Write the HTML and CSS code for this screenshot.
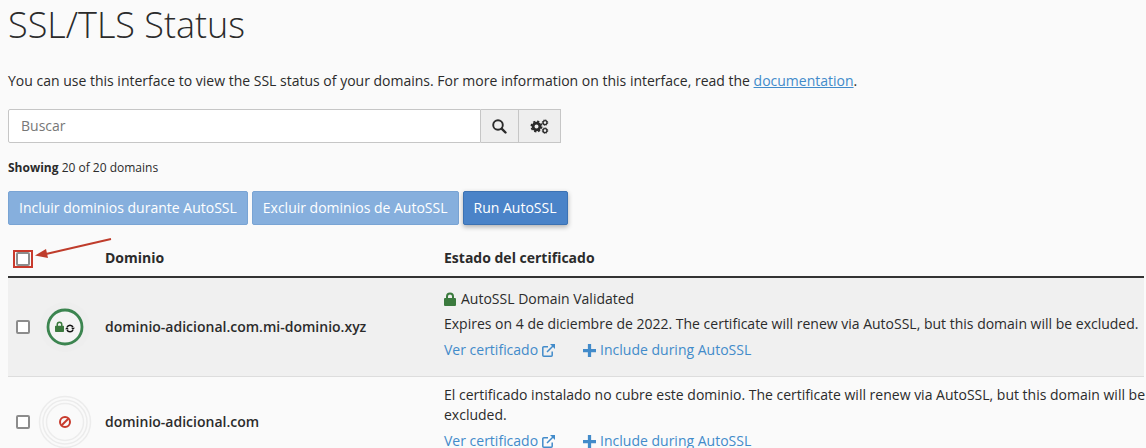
FILE: index.html
```html
<!DOCTYPE html>
<html lang="es">
<head>
<meta charset="utf-8">
<title>SSL/TLS Status</title>
<link rel="stylesheet" href="styles.css">
</head>
<body>
<svg class="sprite" aria-hidden="true">
  <symbol id="lock" viewBox="0 0 12 14"><path fill="currentColor" d="M1 6h1V4.500a4 4 0 0 1 8 0V6h1a1 1 0 0 1 1 1v6a1 1 0 0 1-1 1H1a1 1 0 0 1-1-1V7a1 1 0 0 1 1-1zm3 0h4V4.500a2 2 0 0 0-4 0z"/></symbol>
  <symbol id="external" viewBox="0 0 13 13"><path fill="none" stroke="currentColor" stroke-width="1.500" d="M6 2.800H1.800a1 1 0 0 0-1 1v7.400a1 1 0 0 0 1 1h7.400a1 1 0 0 0 1-1V7.500M5 8l6-6"/><path fill="currentColor" d="M8 0H13v5z"/></symbol>
  <symbol id="plus" viewBox="0 0 12 12"><path fill="currentColor" d="M4.500 0h3v4.500H12v3H7.500V12h-3V7.500H0v-3h4.500z"/></symbol>
</svg>
<main class="page">
  <h1 class="title">SSL/TLS Status</h1>
  <p class="intro">You can use this interface to view the SSL status of your domains. For more information on this interface, read the <a class="doc-link" href="#">documentation</a>.</p>

  <form class="search" role="search">
    <input class="search-input" type="text" placeholder="Buscar" aria-label="Buscar">
    <button class="search-button" type="button" aria-label="Buscar dominios">
      <svg width="15" height="15" viewBox="0 0 15 15" fill="none" stroke="currentColor"><circle cx="6" cy="6" r="4.800" stroke-width="1.900"/><path d="M9.600 9.600l3.900 3.900" stroke-width="2.400" stroke-linecap="round"/></svg>
    </button>
    <button class="search-button" type="button" aria-label="Opciones">
      <svg width="19" height="15" viewBox="0 0 19 15" fill="none" stroke="currentColor"><circle cx="6.500" cy="7.500" r="3.400" stroke-width="2.800"/><circle cx="6.500" cy="7.500" r="5.200" stroke-width="1.600" stroke-dasharray="2.200 1.884"/><circle cx="15" cy="3.600" r="2" stroke-width="1.400"/><circle cx="15" cy="3.600" r="2.800" stroke-width=".8" stroke-dasharray="1.300 .9"/><circle cx="15" cy="11.600" r="2" stroke-width="1.400"/><circle cx="15" cy="11.600" r="2.800" stroke-width=".8" stroke-dasharray="1.300 .9"/></svg>
    </button>
  </form>

  <p class="showing"><strong>Showing</strong> 20 of 20 domains</p>

  <div class="actions">
    <button class="btn" type="button" disabled>Incluir dominios durante AutoSSL</button>
    <button class="btn" type="button" disabled>Excluir dominios de AutoSSL</button>
    <button class="btn btn-run" type="button">Run AutoSSL</button>
  </div>

  <table class="domains">
    <thead>
      <tr>
        <th class="col-check">
          <span class="marked"><input class="check" type="checkbox" aria-label="Seleccionar todos"></span>
          <svg class="arrow" width="80" height="24" viewBox="0 0 80 24" aria-hidden="true"><path d="M77 2L12 17" stroke="#bf3c2b" stroke-width="1.800"/><path d="M1 18.500L12 12l2 9z" fill="#bf3c2b"/></svg>
        </th>
        <th class="col-icon"></th>
        <th class="col-domain">Dominio</th>
        <th class="col-status">Estado del certificado</th>
      </tr>
    </thead>
    <tbody>
      <tr class="row-alt">
        <td class="col-check"><input class="check" type="checkbox" aria-label="dominio-adicional.com.mi-dominio.xyz"></td>
        <td class="col-icon">
          <svg class="status" width="54" height="54" viewBox="0 0 54 54" aria-hidden="true">
            <circle cx="27" cy="27" r="25" fill="#eee"/>
            <circle cx="27" cy="27" r="17" fill="#f4f4f4" stroke="#3c8550" stroke-width="2.800"/>
            <svg class="green" x="17" y="21" width="9" height="11" viewBox="0 0 12 14" preserveAspectRatio="none"><use href="#lock" width="12" height="14"/></svg>
            <path d="M29 27.300a3.200 3.200 0 0 1 6 0M35 29.700a3.200 3.200 0 0 1-6 0" fill="none" stroke="#111" stroke-width="1.500"/><path d="M27 29.300l1.900-2 2 2zM33 27.700h4l-2 2z" fill="#111"/>
          </svg>
        </td>
        <td class="col-domain">dominio-adicional.com.mi-dominio.xyz</td>
        <td class="col-status">
          <p class="validated"><svg class="lock" width="12" height="14" aria-hidden="true"><use href="#lock"/></svg>AutoSSL Domain Validated</p>
          <p class="detail">Expires on 4 de diciembre de 2022. The certificate will renew via AutoSSL, but this domain will be excluded.</p>
          <div class="links">
            <a class="link" href="#">Ver certificado<svg width="13" height="13" aria-hidden="true"><use href="#external"/></svg></a>
            <a class="link" href="#"><svg width="13" height="13" aria-hidden="true"><use href="#plus"/></svg>Include during AutoSSL</a>
          </div>
        </td>
      </tr>
      <tr>
        <td class="col-check"><input class="check" type="checkbox" aria-label="dominio-adicional.com"></td>
        <td class="col-icon">
          <svg class="status" width="54" height="54" viewBox="0 0 54 54" fill="none" aria-hidden="true">
            <circle cx="27" cy="27" r="25.500" stroke="#ececec" stroke-width="1.500"/><circle cx="27" cy="27" r="22" stroke="#ececec" stroke-width="1.500"/><circle cx="27" cy="27" r="18.500" stroke="#ececec" stroke-width="1.500"/>
            <circle cx="27" cy="27" r="5" stroke="#c83a2c" stroke-width="2"/><path d="M23.700 30.300l6.600-6.600" stroke="#c83a2c" stroke-width="2"/>
          </svg>
        </td>
        <td class="col-domain">dominio-adicional.com</td>
        <td class="col-status">
          <p class="detail">El certificado instalado no cubre este dominio. The certificate will renew via AutoSSL, but this domain will be excluded.</p>
          <div class="links">
            <a class="link" href="#">Ver certificado<svg width="13" height="13" aria-hidden="true"><use href="#external"/></svg></a>
            <a class="link" href="#"><svg width="13" height="13" aria-hidden="true"><use href="#plus"/></svg>Include during AutoSSL</a>
          </div>
        </td>
      </tr>
    </tbody>
  </table>
</main>
</body>
</html>
```
FILE: styles.css
```css
* { box-sizing: border-box; }
html { overflow: hidden; }
body {
  margin: 0;
  background: #fafafa;
  color: #2b2b2b;
  font: 14px/20px "Open Sans", "Noto Sans", sans-serif;
}
h1, p { margin: 0; }
.sprite { display: none; }
.page { padding: 5px 2px 0 8px; }
.title { font-size: 36px; line-height: 40px; font-weight: 300; }
.intro { margin-top: 26px; }
.doc-link { color: #428bca; text-decoration: underline; }

.search { display: flex; width: 553px; max-width: 100%; height: 34px; margin-top: 18px; }
.search-input {
  flex: 1;
  min-width: 0;
  padding: 6px 12px;
  border: 1px solid #c6c6c6;
  border-radius: 2px 0 0 2px;
  background: #fff;
  color: inherit;
  font: inherit;
}
.search-input::placeholder { color: #777; opacity: 1; }
.search-button {
  display: grid;
  place-items: center;
  padding: 0 11px;
  border: 1px solid #c6c6c6;
  border-left: 0;
  background: #eee;
  color: #2b2b2b;
}

.showing { margin-top: 15px; font-size: 12px; }

.actions { display: flex; gap: 4px; margin-top: 13px; }
.btn {
  height: 34px;
  padding: 0 10px;
  border: 1px solid #79a4d4;
  border-radius: 2px;
  background: #86afdd;
  color: #fff;
  font: inherit;
}
.btn-run {
  border-color: #3c72b3;
  background: #4a83c8;
  box-shadow: 0 2px 5px #0000004d;
}

.domains { width: 100%; margin-top: 14px; border-collapse: collapse; }
.domains th { height: 38px; padding: 0 8px; border-bottom: 2px solid #333; text-align: left; }
.domains td { padding: 8px; border-bottom: 1px solid #ddd; vertical-align: middle; }
.row-alt { background: #f0f0f0; }
.domains .col-check { position: relative; width: 30px; padding: 0 0 0 8px; }
.domains .col-icon { width: 58px; padding: 0; }
.domains .col-domain { width: 340px; padding-left: 9px; font-weight: 600; }
.domains .col-status { padding-right: 0; }
.domains th, .domains th.col-domain { font-weight: 700; }
.check {
  display: block;
  appearance: none;
  width: 14px;
  height: 14px;
  margin: 0;
  border: 2px solid #8c8c8c;
  border-radius: 2px;
  background: #fff;
}
.marked { display: inline-block; margin-left: -3px; border: 2px solid #c83a2c; padding: 0 1px; vertical-align: middle; }
.arrow { position: absolute; top: -2px; left: 26px; }
.status { display: block; }
.green, .lock { color: #3b7a3e; }
.validated { display: flex; align-items: center; gap: 5px; height: 28px; padding-bottom: 2px; }
.detail { margin-right: -2px; }
.links { display: flex; gap: 28px; padding: 6px 0 8px; }
.link { display: inline-flex; align-items: center; gap: 4px; color: #428bca; text-decoration: none; }
```
